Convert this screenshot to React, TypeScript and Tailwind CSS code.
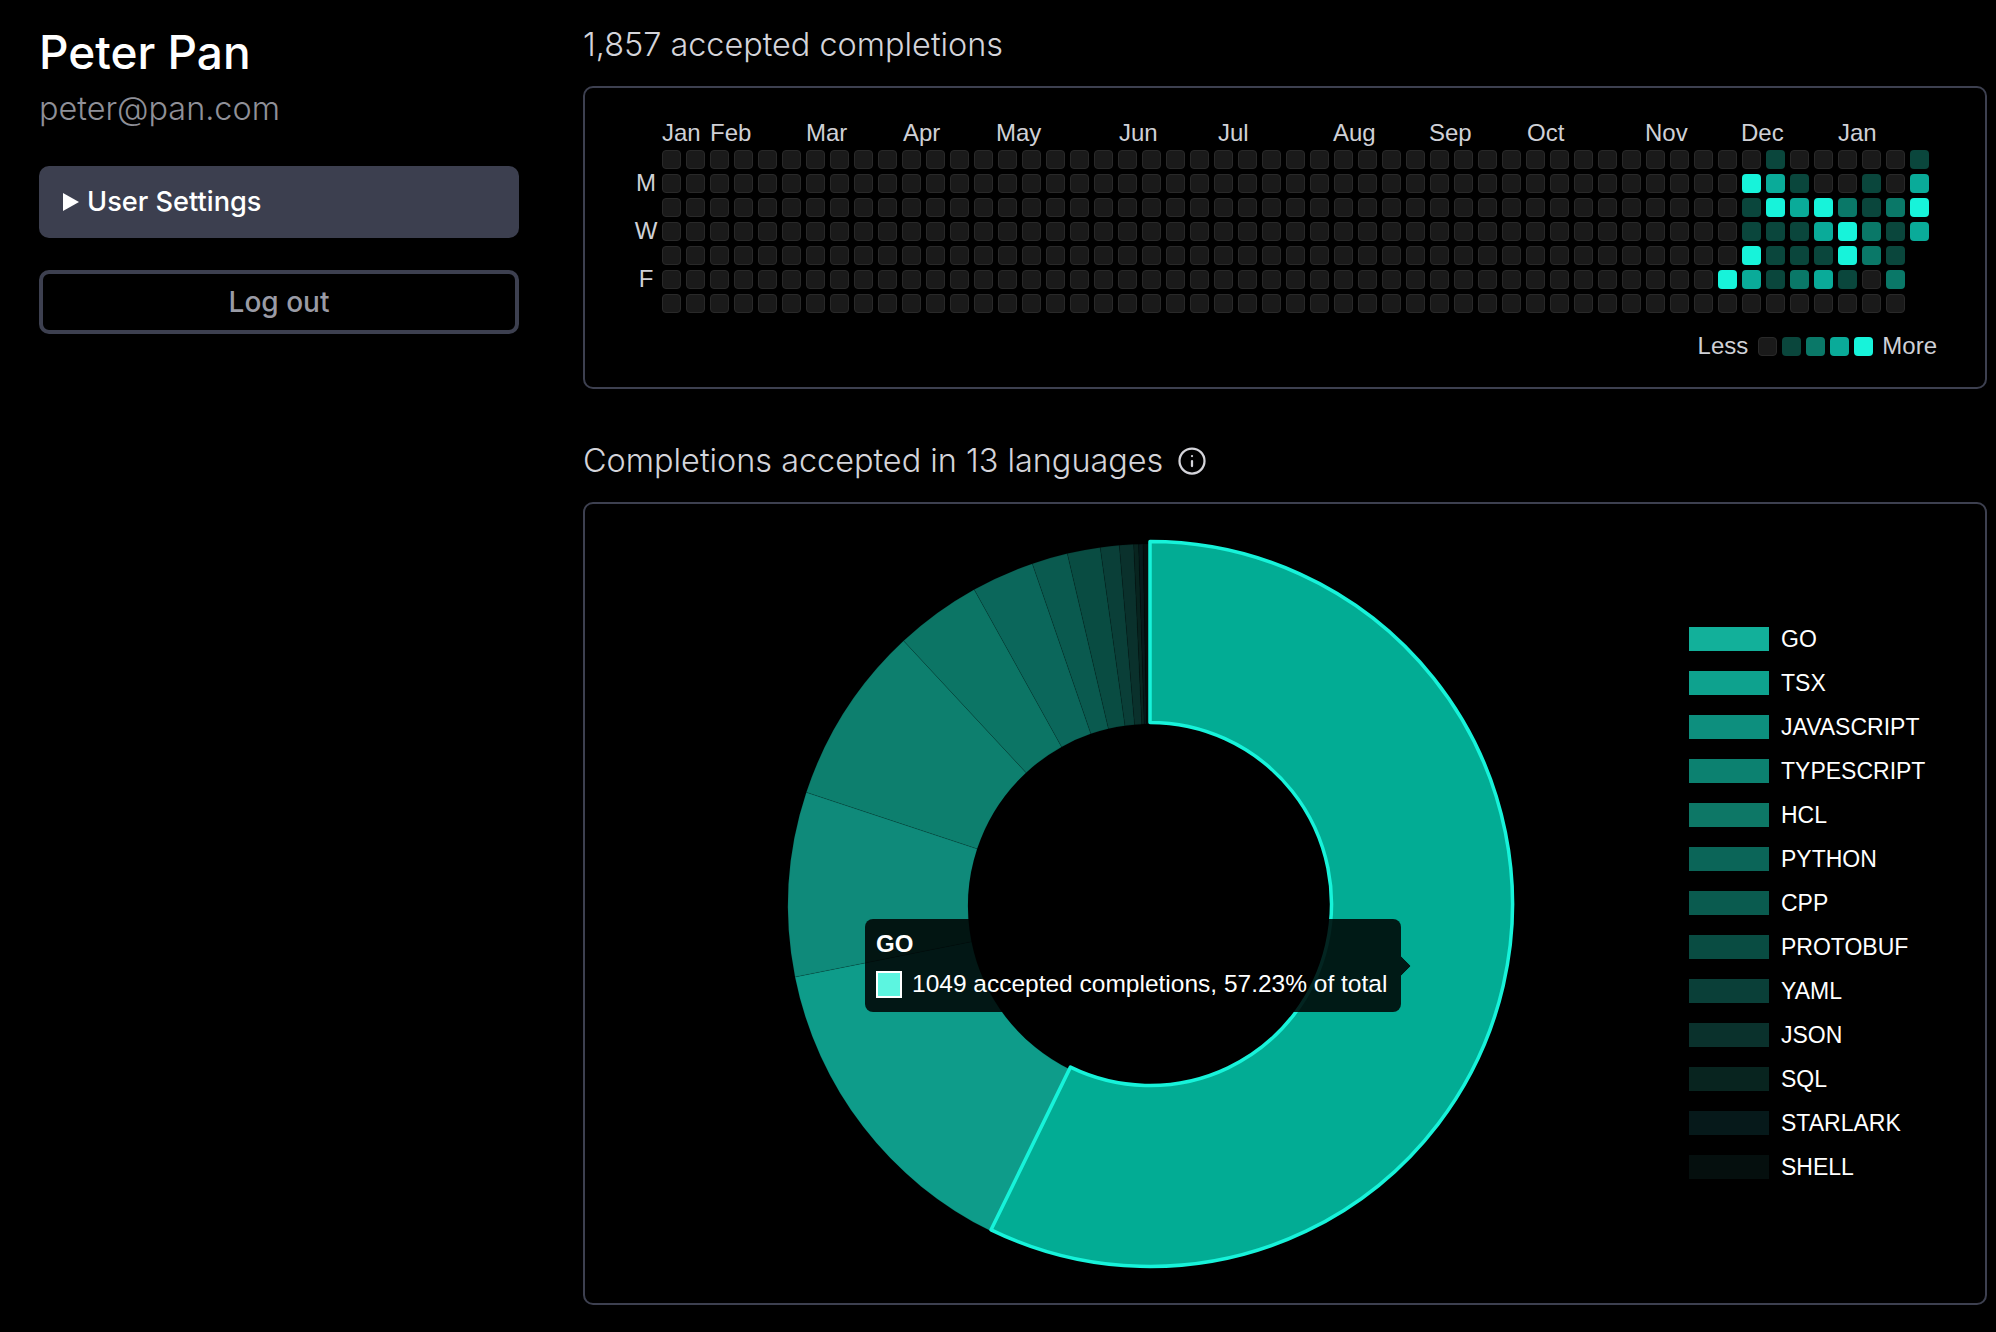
import React from 'react';
import { Info } from 'lucide-react';

// label, week column, small nudge in px
const MONTHS: [string, number, number][] = [
  ['Jan', 0, 0], ['Feb', 2, 0], ['Mar', 6, 0], ['Apr', 10, 1], ['May', 14, -2], ['Jun', 19, 1], ['Jul', 23, 4],
  ['Aug', 28, -1], ['Sep', 32, -1], ['Oct', 36, 1], ['Nov', 41, -1], ['Dec', 45, -1], ['Jan', 49, 0],
];

// activity levels for the last weeks, everything before col 44 is empty
const ACTIVE: Record<number, number[]> = {
  44: [0, 0, 0, 0, 0, 4, 0],
  45: [0, 4, 1, 1, 4, 3, 0],
  46: [1, 3, 4, 1, 1, 1, 0],
  47: [0, 1, 3, 1, 1, 2, 0],
  48: [0, 0, 4, 3, 1, 3, 0],
  49: [0, 0, 2, 4, 4, 1, 0],
  50: [0, 1, 1, 2, 2, 0, 0],
  51: [0, 0, 2, 1, 1, 2, 0],
  52: [1, 3, 4, 3],
};

const LEVELS = [
  'bg-[#1a1a1a] border border-[#292929]',
  'bg-[#0a463c]',
  'bg-[#0a7868]',
  'bg-[#0aab99]',
  'bg-[#17f3da]',
];

const LANGUAGES: { name: string; end: number; slice: string; legend: string }[] = [
  { name: 'GO', end: 206, slice: '#02ac94', legend: '#12b09a' },
  { name: 'TSX', end: 258.7, slice: '#0e9c8a', legend: '#0ea28e' },
  { name: 'JAVASCRIPT', end: 288.3, slice: '#0f8a7a', legend: '#0d8f7e' },
  { name: 'TYPESCRIPT', end: 317.1, slice: '#0d7f6e', legend: '#0c8170' },
  { name: 'HCL', end: 330.95, slice: '#0c7565', legend: '#0d7766' },
  { name: 'PYTHON', end: 341.04, slice: '#0b675b', legend: '#0b6558' },
  { name: 'CPP', end: 346.8, slice: '#0a5a4f', legend: '#0a5b4f' },
  { name: 'PROTOBUF', end: 352.1, slice: '#094c42', legend: '#094c42' },
  { name: 'YAML', end: 355.14, slice: '#0a3f38', legend: '#0a3f38' },
  { name: 'JSON', end: 357.42, slice: '#0a312c', legend: '#0a312c' },
  { name: 'SQL', end: 358.2, slice: '#08241f', legend: '#08241f' },
  { name: 'STARLARK', end: 358.9, slice: '#06191a', legend: '#06191a' },
  { name: 'SHELL', end: 360, slice: '#050f0e', legend: '#050f0e' },
];

const CX = 380;
const CY = 380;

function point(r: number, deg: number) {
  const a = (deg * Math.PI) / 180;
  return `${(CX + r * Math.sin(a)).toFixed(2)} ${(CY - r * Math.cos(a)).toFixed(2)}`;
}

function arc(start: number, end: number, inner: number, outer: number) {
  const large = end - start > 180 ? 1 : 0;
  return `M${point(outer, start)} A${outer} ${outer} 0 ${large} 1 ${point(outer, end)} L${point(inner, end)} A${inner} ${inner} 0 ${large} 0 ${point(inner, start)} Z`;
}

function Cell({ level }: { level: number }) {
  return <div className={`w-[19px] h-[19px] rounded-[4px] ${LEVELS[level]}`} />;
}

function Heatmap() {
  const cells: number[] = [];
  for (let col = 0; col < 53; col++) {
    const rows = col === 52 ? 4 : 7;
    for (let row = 0; row < rows; row++) cells.push(ACTIVE[col] ? ACTIVE[col][row] : 0);
  }

  return (
    <div className="h-[303px] border-2 border-[#3d4050] rounded-[10px] pt-[31px] pl-[48px] font-['Liberation_Sans',sans-serif] text-[24px] leading-[28px] text-[#cfd0d6]">
      <div className="flex">
        <div className="w-[26px] mr-[3px] pt-[28px] flex flex-col text-center">
          <div className="h-[24px]" />
          <div className="h-[24px] leading-[24px]">M</div>
          <div className="h-[24px]" />
          <div className="h-[24px] leading-[24px]">W</div>
          <div className="h-[24px]" />
          <div className="h-[24px] leading-[24px]">F</div>
        </div>
        <div>
          <div className="grid grid-cols-[repeat(53,24px)] h-[31px]">
            {MONTHS.map(([m, col, nudge], i) => (
              <span key={i} className="whitespace-nowrap" style={{ gridColumnStart: col + 1, marginLeft: nudge }}>
                {m}
              </span>
            ))}
          </div>
          <div className="grid grid-flow-col grid-rows-[repeat(7,19px)] auto-cols-[19px] gap-[5px]">
            {cells.map((level, i) => (
              <Cell key={i} level={level} />
            ))}
          </div>
        </div>
      </div>
      <div className="flex items-center justify-end mt-[19px] pr-[48px]">
        <span className="mr-[10px]">Less</span>
        <div className="flex gap-[5px] mr-[9px]">
          {[0, 1, 2, 3, 4].map((l) => (
            <Cell key={l} level={l} />
          ))}
        </div>
        <span>More</span>
      </div>
    </div>
  );
}

function Donut() {
  let start = 0;
  const slices = LANGUAGES.map((l) => {
    const s = { ...l, start };
    start = l.end;
    return s;
  });

  return (
    <svg width="760" height="760" viewBox="0 0 760 760" className="shrink-0">
      <g transform="translate(0 2)">
        {slices.slice(1).map((s) => (
          <path key={s.name} d={arc(s.start, s.end, 182, 362)} fill={s.slice} stroke="#000" strokeOpacity="0.12" strokeWidth="1" />
        ))}
      </g>
      <path d={arc(0, 206, 181.5, 362.5)} fill={slices[0].slice} stroke="#17f3da" strokeWidth="3.5" strokeLinejoin="round" />
    </svg>
  );
}

function Languages() {
  return (
    <div className="relative h-[803px] border-2 border-[#3d4050] rounded-[10px] flex items-center pl-[185px]">
      <Donut />
      <div className="ml-[159px] -mt-[2px] flex flex-col gap-[20px] font-['Liberation_Sans',sans-serif] text-[23px] text-white">
        {LANGUAGES.map((l) => (
          <div key={l.name} className="flex items-center h-[24px]">
            <div className="w-[80px] h-[24px] mr-[12px]" style={{ backgroundColor: l.legend }} />
            <span className="pt-[2px]">{l.name}</span>
          </div>
        ))}
      </div>

      <div className="absolute left-[280px] top-[415px] w-[536px] h-[93px] rounded-[8px] bg-black/85 pl-[11px] pt-[10px] font-['Liberation_Sans',sans-serif] text-white">
        <div className="font-bold text-[24px] leading-[30px]">GO</div>
        <div className="flex items-center mt-[10px]">
          <div className="w-[26px] h-[27px] border-2 border-white bg-[#5cf5e0] mr-[10px]" />
          <span className="text-[24.5px] leading-[30px] whitespace-nowrap">1049 accepted completions, 57.23% of total</span>
        </div>
        <div className="absolute right-[-7px] top-[40px] w-[14px] h-[14px] rotate-45 bg-black/85 [clip-path:polygon(0_0,100%_0,100%_100%)]" />
      </div>
    </div>
  );
}

export default function App() {
  return (
    <div className="min-h-screen bg-black flex font-['Inter',sans-serif] overflow-hidden">
      <aside className="w-[480px] ml-[39px] shrink-0 pt-[24px]">
        <h1 className="text-[46px] leading-[56px] font-medium text-white">Peter Pan</h1>
        <p className="text-[32.4px] leading-[38px] font-light text-[#8f9098] mt-[10px]">peter@pan.com</p>
        <button className="w-full h-[72px] mt-[38px] rounded-[10px] bg-[#3c3f4f] flex items-center pl-[24px] text-white text-[27.2px] font-medium">
          <svg width="16" height="18" viewBox="0 0 16 18" className="mr-[8px]">
            <path d="M0 0 L16 9 L0 18 Z" fill="#fff" />
          </svg>
          User Settings
        </button>
        <button className="w-full h-[64px] mt-[32px] rounded-[10px] border-4 border-[#3d4050] text-[#9a9ba5] text-[28px] font-medium">
          Log out
        </button>
      </aside>

      <main className="ml-[64px] w-[1404px] shrink-0 pt-[26px]">
        <h2 className="text-[32.4px] leading-[38px] font-light text-[#d4d4da] mb-[22px]">1,857 accepted completions</h2>
        <Heatmap />
        <h2 className="text-[32.4px] leading-[38px] font-light text-[#d4d4da] mt-[53px] mb-[22px] flex items-center">
          Completions accepted in 13 languages
          <Info size={30} strokeWidth={1.8} className="ml-[14px]" />
        </h2>
        <Languages />
      </main>
    </div>
  );
}
